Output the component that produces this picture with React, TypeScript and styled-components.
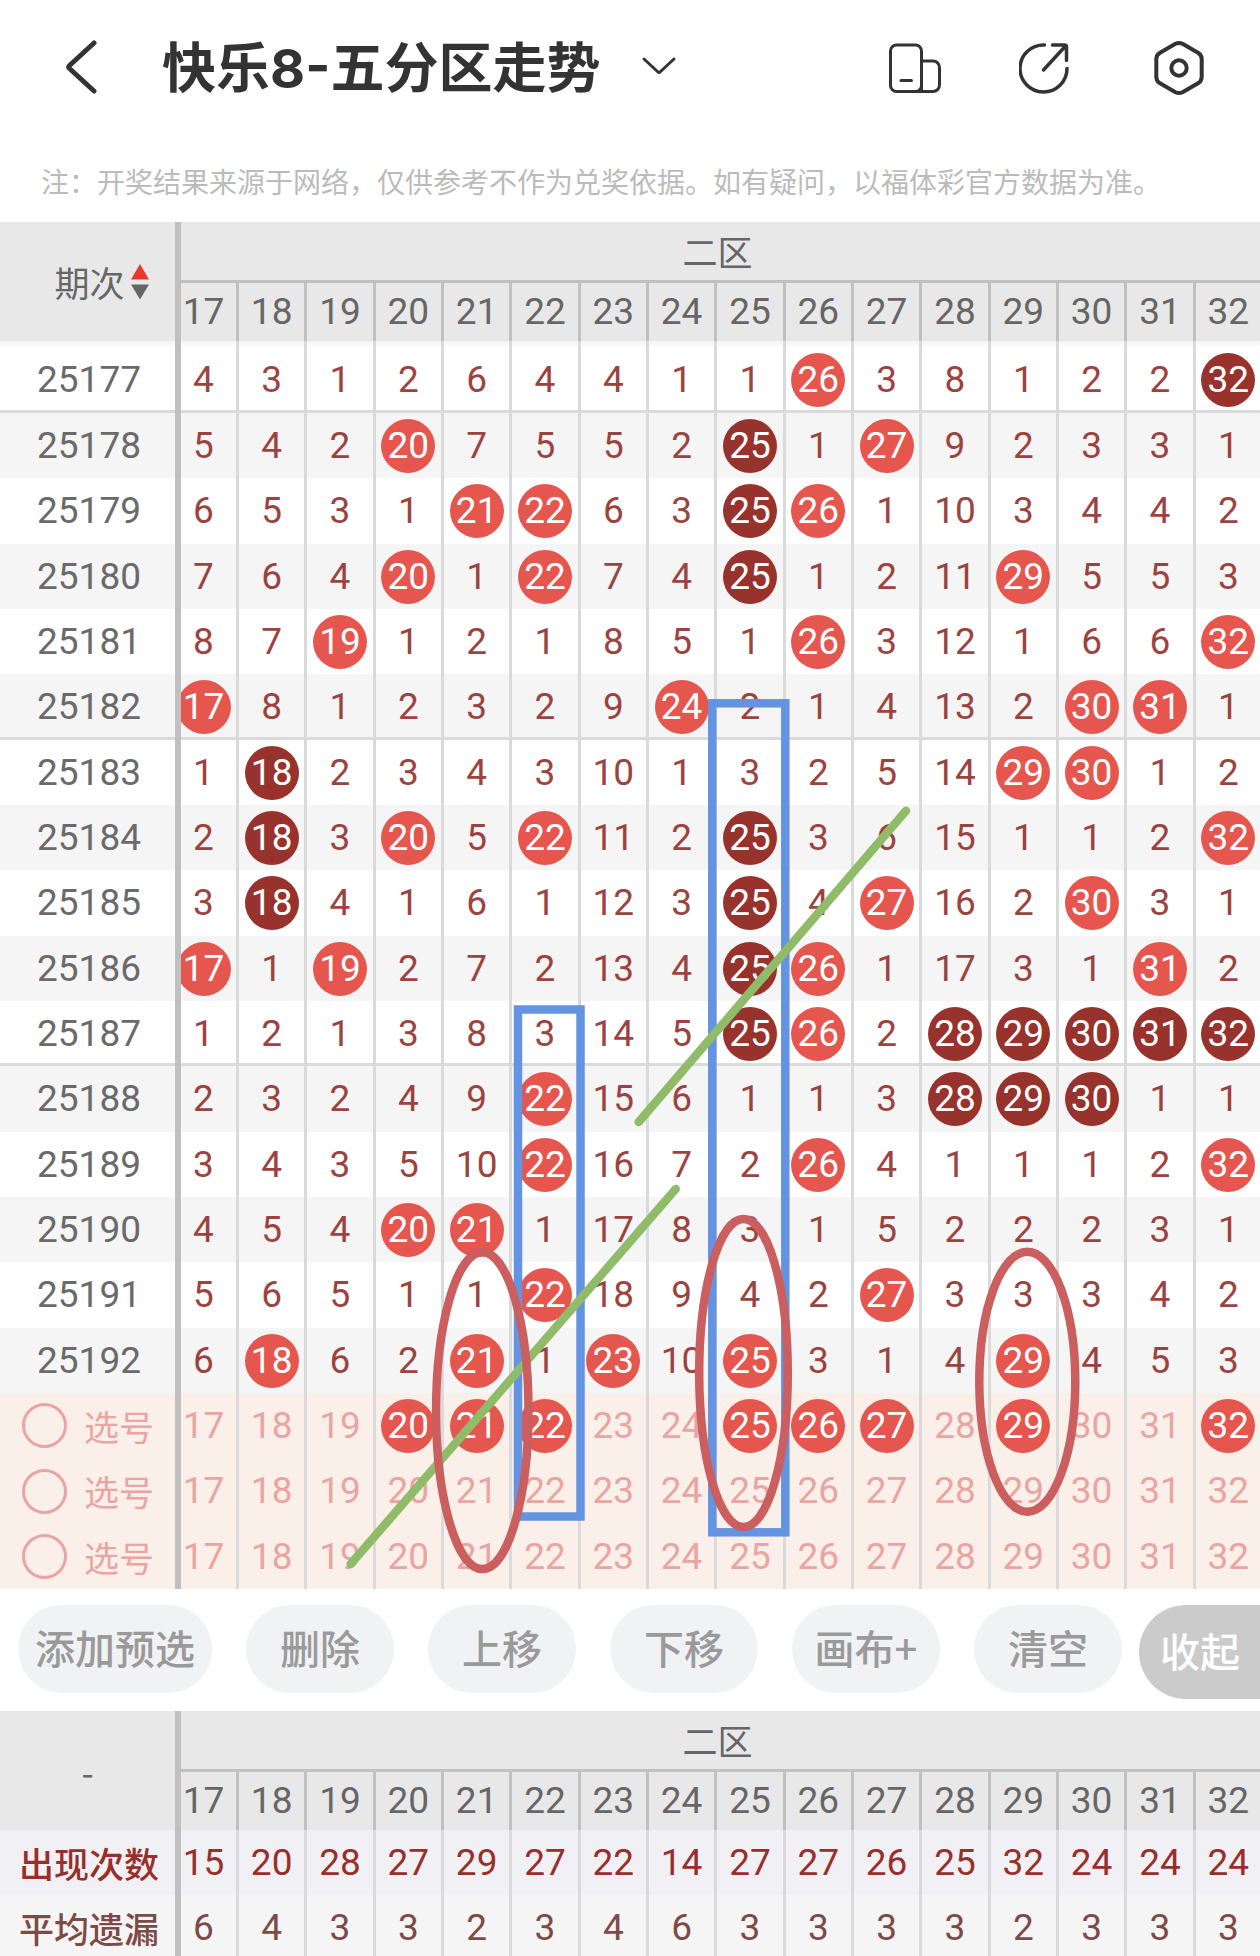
import React, { useState } from "react";
import styled, { createGlobalStyle, css } from "styled-components";

const GlobalStyle = createGlobalStyle`
  *, *::before, *::after { box-sizing: border-box; }
  body {
    margin: 0;
    background: #ffffff;
    color: #333333;
    font-family: Roboto, "Noto Sans CJK SC", sans-serif;
  }
`;

const hanFont = css`
  font-family: "Noto Sans CJK SC", sans-serif;
`;

const Page = styled.div`
  display: flex;
  flex-direction: column;
  height: 100vh;
  overflow: hidden;
`;

const TopBar = styled.header`
  display: flex;
  flex: none;
  align-items: center;
  height: 136px;
  padding: 0 53px;
`;

const IconButton = styled.button`
  display: block;
  width: 56px;
  height: 56px;
  padding: 0;
  border: 0;
  background: none;
  color: #333333;

  svg {
    display: block;
    width: 56px;
    height: 56px;
    fill: none;
    stroke: currentColor;
    stroke-linecap: round;
    stroke-linejoin: round;
  }
`;

const TitleGroup = styled.div`
  display: flex;
  flex: 1;
  align-items: center;
  gap: 31px;
  padding-left: 53px;
`;

const Title = styled.h1`
  margin: 0;
  padding-top: 2px;
  font-family: Inter, "Noto Sans CJK SC", sans-serif;
  font-size: 54px;
  font-weight: 700;
  line-height: 64px;
  white-space: nowrap;
`;

const Actions = styled.div`
  display: flex;
  gap: 76px;
`;

const Notice = styled.p`
  flex: none;
  margin: 0;
  padding: 26px 41px 22px;
  color: #bbbbbb;
  ${hanFont}
  font-size: 28px;
  font-weight: 400;
  line-height: 38px;
  white-space: nowrap;
`;

const Board = styled.main`
  position: relative;
  flex: none;
  overflow: hidden;
`;

const Grid = styled.table`
  width: calc(100% + 4px);
  border-collapse: separate;
  border-spacing: 0;
  table-layout: fixed;
  font-size: 37px;
  line-height: 44px;

  th, td {
    padding: 0;
    font-weight: 400;
  }
`;

const LabelCol = styled.col`
  width: 181px;
`;

const ClippedCol = styled.col`
  width: 58px;
`;

const HeadLabel = styled.th`
  border-right: 6px solid #c0c0c0;
  background: #e8e8e8;
  color: #666666;
  ${hanFont}
  font-size: 35px;
`;

const ZoneHead = styled.th`
  height: 61px;
  border-bottom: 3px solid #c0c0c0;
  background: #e8e8e8;
  color: #666666;
  ${hanFont}
  font-size: 35px;

  && { padding-right: 10px; }
`;

const NumberHead = styled.th`
  height: 58px;
  border-right: 3px solid #c0c0c0;
  background: #e8e8e8;
  color: #666666;

  &:first-child div { padding-right: 10px; }
`;

const SortButton = styled.button`
  display: inline-flex;
  align-items: center;
  gap: 6px;
  padding: 0 0 0 28px;
  border: 0;
  background: none;
  color: inherit;
  font: inherit;
`;

const SortArrows = styled.svg`
  display: block;
  width: 18px;
  height: 36px;
`;

type Tone = "issue" | "pick" | "count" | "average";

const tones = {
  issue: { label: "#6a6a6a", text: "#9c433f", even: "#f5f5f5", odd: "#ffffff" },
  pick: { label: "#e9a5a2", text: "#e9a5a2", even: "#fbefea", odd: "#fbefea" },
  count: { label: "#982f2a", text: "#982f2a", even: "#f0f0f5", odd: "#f0f0f5" },
  average: { label: "#7d4a45", text: "#7d4a45", even: "#f5f5f5", odd: "#f5f5f5" },
};

const Row = styled.tr<{ $tone: Tone; $closing?: boolean }>`
  height: 65px;
  background: ${(p) => tones[p.$tone].odd};
  color: ${(p) => tones[p.$tone].text};

  &:nth-child(3n) { height: 66px; }
  &:nth-child(even) { background: ${(p) => tones[p.$tone].even}; }

  th { color: ${(p) => tones[p.$tone].label}; }

  ${(p) =>
    p.$closing &&
    css`
      th, td { box-shadow: inset 0 -3px #dadada; }
    `}
`;

const TrendBody = styled.tbody`
  tr:first-child {
    height: 72px;
    background: linear-gradient(#f3f3f3, #fafafa 5px, #ffffff 6px);
  }

  tr:first-child th,
  tr:first-child td {
    padding-top: 6px;
  }
`;

const RowLabel = styled.th<{ $han?: boolean; $strong?: boolean }>`
  border-right: 6px solid #c0c0c0;
  font-size: 37px;
  white-space: nowrap;

  && {
    padding-left: 3px;
    font-weight: ${(p) => (p.$strong ? 500 : 400)};
  }

  ${(p) =>
    p.$han &&
    css`
      ${hanFont}
      font-size: 35px;
    `}
`;

const NumberCell = styled.td`
  border-right: 3px solid #dadada;

  &:nth-child(2) > div { padding-right: 10px; }
`;

const CellInner = styled.div`
  display: flex;
  align-items: center;
  justify-content: center;
  height: 58px;
  overflow: hidden;
`;

const Ball = styled.span<{ $repeat?: boolean }>`
  display: flex;
  flex: none;
  align-items: center;
  justify-content: center;
  width: 54px;
  height: 54px;
  border-radius: 50%;
  background: ${(p) => (p.$repeat ? "#98322c" : "#e5564f")};
  color: #ffffff;
`;

const PickButton = styled.button<{ $on: boolean }>`
  flex: none;
  width: 54px;
  height: 54px;
  padding: 0;
  border: 0;
  border-radius: 50%;
  background: ${(p) => (p.$on ? "#e5564f" : "transparent")};
  color: ${(p) => (p.$on ? "#ffffff" : "inherit")};
  font: inherit;
`;

const PickLabel = styled.label`
  display: flex;
  align-items: center;
  gap: 17px;
  padding-left: 19px;
`;

const PickRadio = styled.input`
  width: 45px;
  height: 45px;
  margin: 0;
  border: 3px solid #e9a5a2;
  border-radius: 50%;
  appearance: none;

  &:checked { background: #f6d5d1; }
`;

const Overlay = styled.svg`
  position: absolute;
  inset: 0;
  width: 100%;
  height: 100%;
  fill: none;
  pointer-events: none;
`;

const Toolbar = styled.div`
  display: flex;
  flex: none;
  align-items: flex-start;
  height: 122px;
  padding: 16px 0 0 18px;
`;

const Tools = styled.div`
  display: flex;
  gap: 34px;
`;

const ToolButton = styled.button`
  min-width: 148px;
  height: 88px;
  padding: 0 17px 4px;
  border: 0;
  border-radius: 44px;
  background: #f1f2f4;
  color: #9a9a9a;
  ${hanFont}
  font-size: 40px;
  font-weight: 500;
  line-height: 48px;
  white-space: nowrap;
`;

const CollapseButton = styled.button`
  width: 121px;
  height: 94px;
  margin-left: auto;
  padding: 0 0 4px 21px;
  border: 0;
  border-radius: 47px 0 0 47px;
  background: #cbcbcb;
  color: #ffffff;
  ${hanFont}
  font-size: 40px;
  font-weight: 500;
  line-height: 48px;
  text-align: left;
  white-space: nowrap;
`;

const Stats = styled.section`
  flex: none;
  overflow: hidden;
`;

const numbers = Array.from({ length: 16 }, (_, i) => i + 17);

/* One string per draw: digits are the current miss count, "r" is a hit, "d" is a repeated hit. */
const draws: [string, string][] = [
  ["25177", "4 3 1 2 6 4 4 1 1 r 3 8 1 2 2 d"],
  ["25178", "5 4 2 r 7 5 5 2 d 1 r 9 2 3 3 1"],
  ["25179", "6 5 3 1 r r 6 3 d r 1 10 3 4 4 2"],
  ["25180", "7 6 4 r 1 r 7 4 d 1 2 11 r 5 5 3"],
  ["25181", "8 7 r 1 2 1 8 5 1 r 3 12 1 6 6 r"],
  ["25182", "r 8 1 2 3 2 9 r 2 1 4 13 2 r r 1"],
  ["25183", "1 d 2 3 4 3 10 1 3 2 5 14 r r 1 2"],
  ["25184", "2 d 3 r 5 r 11 2 d 3 6 15 1 1 2 r"],
  ["25185", "3 d 4 1 6 1 12 3 d 4 r 16 2 r 3 1"],
  ["25186", "r 1 r 2 7 2 13 4 d r 1 17 3 1 r 2"],
  ["25187", "1 2 1 3 8 3 14 5 d r 2 d d d d d"],
  ["25188", "2 3 2 4 9 r 15 6 1 1 3 d d d 1 1"],
  ["25189", "3 4 3 5 10 r 16 7 2 r 4 1 1 1 2 r"],
  ["25190", "4 5 4 r r 1 17 8 3 1 5 2 2 2 3 1"],
  ["25191", "5 6 5 1 1 r 18 9 4 2 r 3 3 3 4 2"],
  ["25192", "6 r 6 2 r 1 r 10 r 3 1 4 r 4 5 3"],
];

/* Draws that end a block of five and carry a rule below them. */
const closingIssues = ["25177", "25182", "25187"];

const counts = [15, 20, 28, 27, 29, 27, 22, 14, 27, 27, 26, 25, 32, 24, 24, 24];
const averages = [6, 4, 3, 3, 2, 3, 4, 6, 3, 3, 3, 3, 2, 3, 3, 3];

const Columns = () => (
  <colgroup>
    <LabelCol />
    <ClippedCol />
    {numbers.slice(1).map((n) => (
      <col key={n} />
    ))}
  </colgroup>
);

const Head = ({ children }: { children: React.ReactNode }) => (
  <thead>
    <tr>
      <HeadLabel rowSpan={2} scope="col">
        {children}
      </HeadLabel>
      <ZoneHead colSpan={16} scope="colgroup">
        二区
      </ZoneHead>
    </tr>
    <tr>
      {numbers.map((n) => (
        <NumberHead key={n} scope="col">
          <div>{n}</div>
        </NumberHead>
      ))}
    </tr>
  </thead>
);

const DrawRow = ({ issue, line }: { issue: string; line: string }) => (
  <Row $tone="issue" $closing={closingIssues.includes(issue)}>
    <RowLabel scope="row">{issue}</RowLabel>
    {line.split(" ").map((mark, i) => (
      <NumberCell key={i}>
        <CellInner>
          {mark === "r" || mark === "d" ? <Ball $repeat={mark === "d"}>{numbers[i]}</Ball> : mark}
        </CellInner>
      </NumberCell>
    ))}
  </Row>
);

const StatRow = ({ tone, label, values }: { tone: Tone; label: string; values: number[] }) => (
  <Row $tone={tone}>
    <RowLabel scope="row" $han $strong>
      {label}
    </RowLabel>
    {values.map((v, i) => (
      <NumberCell key={i}>
        <CellInner>{v}</CellInner>
      </NumberCell>
    ))}
  </Row>
);

export default function App() {
  const [picks, setPicks] = useState<number[][]>([[20, 21, 22, 25, 26, 27, 29, 32], [], []]);
  const toggle = (row: number, n: number) =>
    setPicks((all) =>
      all.map((set, i) => (i !== row ? set : set.includes(n) ? set.filter((x) => x !== n) : [...set, n]))
    );

  return (
    <Page>
      <GlobalStyle />
      <TopBar>
        <IconButton aria-label="返回">
          <svg viewBox="0 0 56 56" strokeWidth="5">
            <path d="M41 3 L16.500 25.500 Q15 27 16.500 28.500 L41 51" />
          </svg>
        </IconButton>
        <TitleGroup>
          <Title>快乐8-五分区走势</Title>
          <IconButton aria-label="切换走势">
            <svg viewBox="0 0 56 56" strokeWidth="3">
              <path d="M13 19 L27 32 Q28 33 29 32 L43 19" />
            </svg>
          </IconButton>
        </TitleGroup>
        <Actions>
          <IconButton aria-label="横屏">
            <svg viewBox="0 0 56 56" strokeWidth="3">
              <rect x="3.500" y="5" width="31" height="46.500" rx="6" />
              <path d="M34.500 21 H46 a6.500 6.500 0 0 1 6.500 6.500 V45 a6.500 6.500 0 0 1 -6.500 6.500 H28 M34.500 44 V51" />
              <path d="M14 40.500 H24.500" />
            </svg>
          </IconButton>
          <IconButton aria-label="分享">
            <svg viewBox="0 0 56 56" strokeWidth="3.500">
              <path d="M25.500 5 A23.500 23.500 0 1 0 48 28.500" />
              <path d="M33.500 5 H45.500 Q47.500 5 47.500 7 V20.500 M47 5.500 L24.500 30" />
            </svg>
          </IconButton>
          <IconButton aria-label="设置">
            <svg viewBox="0 0 56 56" strokeWidth="4">
              <path d="M24.500 3.800 Q28 2 31.500 3.800 L47 12.800 Q50.700 15 50.700 19 V37 Q50.700 41 47 43.200 L31.500 52.200 Q28 54 24.500 52.200 L9 43.200 Q5.300 41 5.300 37 V19 Q5.300 15 9 12.800 Z" />
              <circle cx="28" cy="28" r="7.700" />
            </svg>
          </IconButton>
        </Actions>
      </TopBar>
      <Notice>注：开奖结果来源于网络，仅供参考不作为兑奖依据。如有疑问，以福体彩官方数据为准。</Notice>

      <Board>
        <Grid>
          <Columns />
          <Head>
            <SortButton>
              期次
              <SortArrows viewBox="0 0 18 36" aria-hidden="true">
                <path d="M9 0 L18 15.500 H0 Z" fill="#e83a28" />
                <path d="M0 20.500 H18 L9 35.500 Z" fill="#666666" />
              </SortArrows>
            </SortButton>
          </Head>
          <TrendBody>
            {draws.map(([issue, line]) => (
              <DrawRow key={issue} issue={issue} line={line} />
            ))}
            {picks.map((set, row) => (
              <Row key={row} $tone="pick">
                <RowLabel scope="row" $han>
                  <PickLabel>
                    <PickRadio type="radio" name="pick-row" />
                    选号
                  </PickLabel>
                </RowLabel>
                {numbers.map((n) => (
                  <NumberCell key={n}>
                    <CellInner>
                      <PickButton $on={set.includes(n)} aria-pressed={set.includes(n)} onClick={() => toggle(row, n)}>
                        {n}
                      </PickButton>
                    </CellInner>
                  </NumberCell>
                ))}
              </Row>
            ))}
          </TrendBody>
        </Grid>
        <Overlay viewBox="0 222 1260 1367" preserveAspectRatio="none" strokeWidth="8.500" aria-hidden="true">
          <g stroke="#6393e1">
            <rect x="518" y="1009.500" width="62.500" height="507" />
            <rect x="712.300" y="703.300" width="73" height="829" />
          </g>
          <g stroke="#90bc69" strokeLinecap="round">
            <path d="M906 810.700 L638.700 1122" />
            <path d="M675.700 1189 L350.700 1564" />
          </g>
          <g stroke="#cb5e5e">
            <ellipse cx="482.300" cy="1410.700" rx="46.200" ry="158.400" />
            <ellipse cx="743.500" cy="1373" rx="44.300" ry="154" />
            <ellipse cx="1027.300" cy="1381.700" rx="48" ry="130" />
          </g>
        </Overlay>
      </Board>

      <Toolbar>
        <Tools>
          <ToolButton>添加预选</ToolButton>
          <ToolButton>删除</ToolButton>
          <ToolButton>上移</ToolButton>
          <ToolButton>下移</ToolButton>
          <ToolButton>画布+</ToolButton>
          <ToolButton>清空</ToolButton>
        </Tools>
        <CollapseButton>收起</CollapseButton>
      </Toolbar>

      <Stats>
        <Grid>
          <Columns />
          <Head>-</Head>
          <tbody>
            <StatRow tone="count" label="出现次数" values={counts} />
            <StatRow tone="average" label="平均遗漏" values={averages} />
          </tbody>
        </Grid>
      </Stats>
    </Page>
  );
}
